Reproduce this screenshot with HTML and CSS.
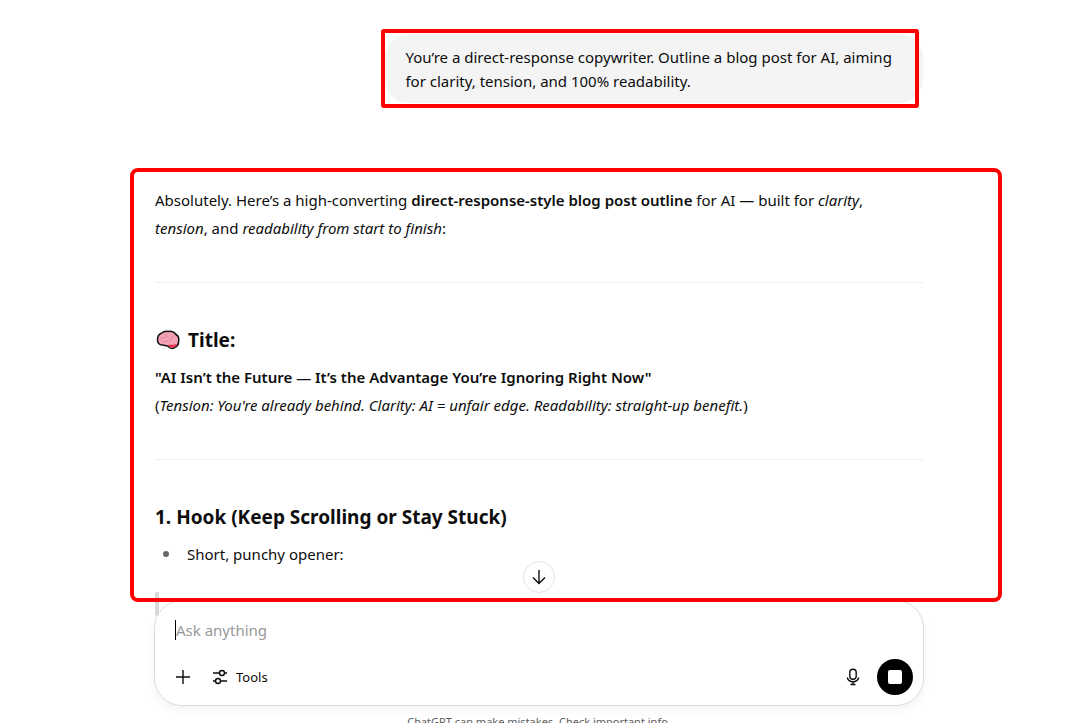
FILE: index.html
```html
<!DOCTYPE html>
<html lang="en">
<head>
  <meta charset="UTF-8">
  <meta name="viewport" content="width=device-width, initial-scale=1.0">
  <title>ChatGPT</title>
  <link rel="stylesheet" href="styles.css">
</head>
<body>

  <main class="page">
    <section class="thread">
      <div class="user-row">
        <div class="bubble">You’re a direct-response copywriter. Outline a blog post for AI, aiming for clarity, tension, and 100% readability.</div>
        <div class="mark mark-user"></div>
      </div>

      <article class="answer">
        <p>Absolutely. Here’s a high-converting <strong>direct-response-style blog post outline</strong> for AI — built for <em>clarity</em>,<br>
          <em>tension</em>, and <em>readability from start to finish</em>:</p>
        <hr>
        <h3>
          <svg class="brain" viewBox="0 0 24 20" aria-hidden="true">
            <path d="M1.500 10C1.500 7 2.500 4.500 5 3.500C7.500 1.500 10 1 12 1.500C15 1 18 2 19.500 4C22 5.500 23.300 8.500 22.500 11.500C22.800 14 21.500 16 19.500 17C17.500 19 13.500 19 12 16C10 16.500 8.500 15.500 7.500 15C4 15.500 1.500 13.500 1.500 10Z" fill="#f4a3b5" stroke="#111" stroke-width="1.500"/>
            <path d="M12 15C14 14.500 18 15.500 21.500 13.500C21 16 18.500 17.800 16 17.500C14 17.500 12.800 16.500 12 15Z" fill="#e8344f"/>
            <path d="M4 9C6 7 7 8.500 9 7.500M10 4C9 6 12 6 13 8M17.500 5.500C15 6 17 9 14 11M7 12.500C9 10.500 10 12 12 11" fill="none" stroke="#e07d92" stroke-linecap="round"/>
          </svg>
          Title:
        </h3>
        <p><strong>"AI Isn’t the Future — It’s the Advantage You’re Ignoring Right Now"</strong><br>
          (<em>Tension: You're already behind. Clarity: AI = unfair edge. Readability: straight-up benefit.</em>)</p>
        <hr>
        <h3>1. Hook (Keep Scrolling or Stay Stuck)</h3>
        <ul>
          <li>Short, punchy opener:</li>
        </ul>
        <blockquote></blockquote>
        <div class="mark mark-answer"></div>
      </article>
    </section>

    <section class="dock">
      <button class="scroll-down" type="button" aria-label="Scroll to bottom">
        <svg width="20" height="20" viewBox="0 0 20 20"><path d="M10 3V16M4 10.500L10 16.500L16 10.500"/></svg>
      </button>
      <form class="composer">
        <div class="prompt">
          <span class="caret"></span>
          <input type="text" placeholder="Ask anything" aria-label="Ask anything">
        </div>
        <div class="actions">
          <button class="icon-button" type="button" aria-label="Add">
            <svg width="20" height="20" viewBox="0 0 20 20"><path d="M10 3V17M3 10H17"/></svg>
          </button>
          <button class="tools" type="button">
            <svg width="20" height="20" viewBox="0 0 20 20"><path d="M3 6H9.500M14.500 6H17M3 14H5.500M10.500 14H17"/><circle cx="12" cy="6" r="2.500"/><circle cx="8" cy="14" r="2.500"/></svg>
            Tools
          </button>
          <button class="icon-button mic" type="button" aria-label="Dictate">
            <svg width="20" height="20" viewBox="0 0 20 20"><rect x="6.800" y="2.300" width="6.400" height="10" rx="3.200"/><path d="M4.300 10.500C5 13.300 7.200 14.800 10 14.800S15 13.300 15.700 10.500M10 14.800V17.500M7.500 17.500H12.500"/></svg>
          </button>
          <button class="stop" type="button" aria-label="Stop">
            <span class="stop-square"></span>
          </button>
        </div>
      </form>
      <p class="notice">ChatGPT can make mistakes. Check important info.</p>
    </section>
  </main>

</body>
</html>
```
FILE: styles.css
```css
html {
  overflow: hidden;
}

* {
  box-sizing: border-box;
}

body {
  margin: 0;
  padding-right: 10px; /* room for the scrollbar */
  background: #fff;
  color: #0d0d0d;
  font-family: "Segoe UI", "Noto Sans", "Open Sans", sans-serif;
  font-size: 15px;
  line-height: 28px;
}

.page {
  max-width: 768px;
  margin: 0 auto;
  padding-top: 34px;
}

.user-row {
  position: relative;
  display: flex;
  justify-content: flex-end;
}

.bubble {
  max-width: 70%;
  padding: 11px 20px 10px;
  border-radius: 24px;
  background: #f4f4f4;
  line-height: 24px;
}

/* red highlight frames */
.mark {
  position: absolute;
  border: 4px solid #f00;
  pointer-events: none;
}

.mark-user {
  top: -5px;
  right: 4px;
  bottom: -5px;
  width: 70%;
  border-radius: 3px;
}

.mark-answer {
  z-index: 2;
  top: 65px;
  left: -25px;
  right: -79px;
  bottom: 14px;
  border-radius: 8px;
}

.answer {
  position: relative;
  padding-top: 83px;
}

.answer p {
  margin: 0;
}

strong {
  font-weight: 600;
}

hr {
  margin: 40px 0;
  border: 0;
  border-top: 1px solid #f0f0f0;
}

h3 {
  display: flex;
  align-items: center;
  gap: 8px;
  margin: 0 0 6px;
  font-size: 19px;
  font-weight: 700;
  line-height: 34px;
}

.brain {
  width: 24px;
  height: 20px;
  margin-left: 1px;
}

ul {
  margin: 0;
  padding-left: 32px;
  list-style: none;
}

li {
  display: flex;
  align-items: center;
}

li::before {
  content: "";
  width: 6px;
  height: 6px;
  margin: 0 18px 0 -24px;
  border-radius: 50%;
  background: #666;
}

blockquote {
  height: 24px;
  margin: 24px 0 0;
  border-left: 4px solid #d9d9d9;
  border-radius: 2px;
}

.dock {
  position: relative;
  margin: -16px -1px 0;
}

button {
  display: flex;
  align-items: center;
  justify-content: center;
  padding: 0;
  border: 0;
  background: none;
  color: inherit;
  font: inherit;
}

button svg {
  fill: none;
  stroke: currentColor;
  stroke-width: 1.4;
}

.scroll-down {
  position: absolute;
  z-index: 3;
  top: -39px;
  left: calc(50% - 16px);
  width: 32px;
  height: 32px;
  border: 1px solid #e3e3e3;
  border-radius: 50%;
  background: #fff;
}

.composer {
  position: relative;
  padding: 17px 10px 10px;
  border: 1px solid #dcdcdc;
  border-radius: 28px;
  background: #fff;
  box-shadow: 0 4px 8px rgba(0, 0, 0, 0.05);
}

.prompt {
  display: flex;
  align-items: center;
  height: 24px;
  margin: 0 10px 17px;
}

.caret {
  width: 1px;
  height: 20px;
  background: #000;
}

.prompt input {
  flex: 1;
  min-width: 0;
  padding: 0;
  border: 0;
  outline: 0;
  background: none;
  font: inherit;
}

.prompt input::placeholder {
  color: #999;
}

.actions {
  display: flex;
  align-items: center;
  height: 36px;
}

.icon-button {
  width: 36px;
  height: 36px;
}

.tools {
  gap: 6px;
  padding: 0 9px;
  font-size: 13px;
}

.mic {
  margin-left: auto;
  margin-right: 6px;
}

.stop {
  width: 36px;
  height: 36px;
  border-radius: 50%;
  background: #000;
}

.stop-square {
  width: 14px;
  height: 14px;
  border-radius: 2px;
  background: #fff;
}

.notice {
  margin: 8px 0 0;
  color: #5d5d5d;
  font-size: 11px;
  line-height: 16px;
  text-align: center;
}
```
